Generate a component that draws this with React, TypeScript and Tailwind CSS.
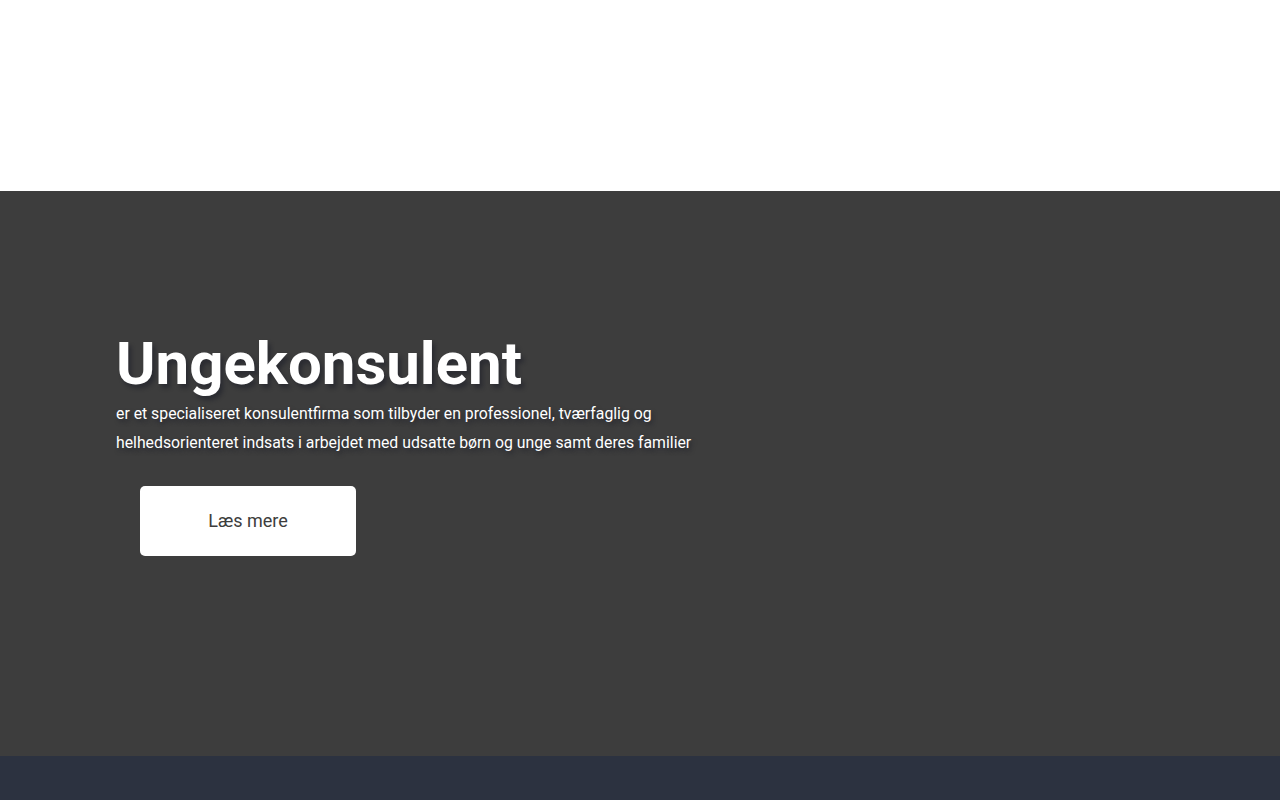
export default function App() {
  return (
    <div className="min-h-[800px] bg-[#2c3240] font-['Roboto',sans-serif]">
      <header className="h-[191px] bg-white" />

      <section className="h-[565px] bg-[#3d3d3d]">
        <div className="pl-[116px] pt-[141px]">
          <h1 className="text-[60px] font-bold leading-[64px] text-white [text-shadow:3px_4px_4px_rgba(20,22,35,0.45)]">
            Ungekonsulent
          </h1>
          <p className="mt-[3px] w-[600px] text-[15.8px] leading-[29px] text-white [text-shadow:2px_3px_4px_rgba(20,22,35,0.5)]">
            er et specialiseret konsulentfirma som tilbyder en professionel, tværfaglig og
            helhedsorienteret indsats i arbejdet med udsatte børn og unge samt deres familier
          </p>
          <div className="flex pl-[24px] pt-[29px]">
            <button className="w-[216px] h-[70px] rounded-[5px] bg-white text-[18px] leading-[24px] text-[#3d3d3d]">
              Læs mere
            </button>
          </div>
        </div>
      </section>

      <footer className="h-[44px] bg-[#2c3240]" />
    </div>
  );
}
